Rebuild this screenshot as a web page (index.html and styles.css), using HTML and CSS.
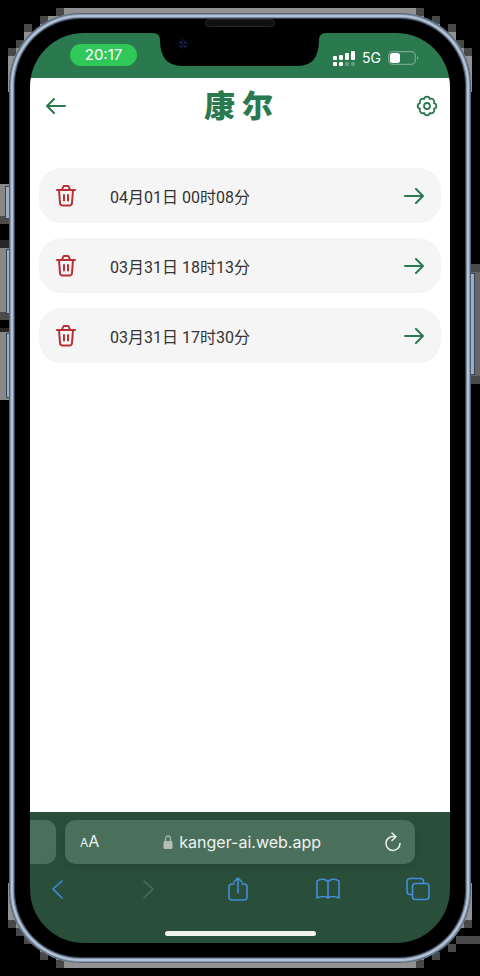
FILE: index.html
```html
<!DOCTYPE html>
<html lang="zh-CN">
<head>
<meta charset="utf-8">
<meta name="viewport" content="width=device-width, initial-scale=1">
<title>康尔</title>
<link rel="stylesheet" href="styles.css">
</head>
<body>
<svg class="halo" viewBox="0 0 480 976" preserveAspectRatio="none" shape-rendering="crispEdges" aria-hidden="true">
  <path fill="#929292" d="M64 8H416V16H424V24H440V32H456V48H464V56H472V92H464V883H472V920H464V928H456V936H448V944H432V952H424V968H64V960H56V952H40V944H32V936H24V928H16V920H8V883H16V92H8V56H16V40H24V32H40V16H64Z"/>
  <path fill="#484848" d="M56 8h8v8h-8zM40 16h8v8h-8zM24 24h8v8h-8zM16 40h8v8h-8zM8 48h8v8h-8zM416 8h8v8h-8zM432 16h8v8h-8zM448 24h8v8h-8zM456 40h8v8h-8zM464 48h8v8h-8zM8 920h8v8h-8zM16 928h8v8h-8zM24 936h8v8h-8zM40 952h8v8h-8zM56 960h8v8h-8zM416 960h8v8h-8zM432 952h8v8h-8zM448 944h8v8h-8zM456 936h24v8h-24zM464 920h8v8h-8z"/>
  <path fill="#888" d="M0 184h10v32H0zM0 248h10v64H0zM0 332h10v68H0z"/>
  <path fill="#4b4b4b" d="M0 216h10v8H0zM0 312h10v8H0zM470 264h10v8h-10zM470 376h10v8h-10z"/>
  <path fill="#262626" d="M0 240h10v8H0zM0 328h10v4H0z"/>
  <path fill="#666" d="M470 272h10v104h-10z"/>
  <g fill="#9dadbd" stroke="#34465a"><path d="M5 186h6v32H5zM6 249h5v64H6zM6 333h5v64H6zM469 273h5v101h-5z"/></g>
</svg>
<div class="phone">
  <svg class="notch" viewBox="0 0 174 50" aria-hidden="true">
    <path d="M-7 15Q0 15 0 22Q0 48 22 48H138Q159 48 159 22Q159 15 166 15V14H-7Z"/>
    <rect x="45.500" y="1.500" width="69" height="7" rx="3" fill="#101010" stroke="#262626"/>
    <circle cx="23" cy="26" r="5" fill="#090a1c"/>
    <path d="M21 24v1M25 24v1M21 28v1M25 28v1" stroke="#3437a3" stroke-width="1.500"/>
  </svg>
  <div class="screen">
    <div class="status">
      <time class="clock">20:17</time>
      <div class="signals">
        <svg width="22" height="16" viewBox="0 0 22 16" aria-hidden="true"><g fill="#fff"><rect x="0" y="6" width="4" height="4" rx="1"/><rect x="6" y="5" width="4" height="5" rx="1"/><rect x="12" y="3" width="4" height="7" rx="1"/><rect x="18" y="1" width="4" height="9" rx="1"/><rect x="0" y="12" width="4" height="4" rx="1"/><rect x="6" y="12" width="4" height="4" rx="1"/></g><g fill="#649c7c"><rect x="12" y="12" width="4" height="4" rx="1"/><rect x="18" y="12" width="4" height="4" rx="1"/></g></svg>
        <span>5G</span>
        <svg width="31" height="14" viewBox="0 0 31 14" aria-hidden="true"><rect x=".7" y=".7" width="26.6" height="12.6" rx="4" fill="none" stroke="#76a78a" stroke-width="1.3"/><rect x="2" y="2" width="10" height="10" rx="2.5" fill="#fff"/><path d="M29 5q3 2 0 4z" fill="#76a78a"/></svg>
      </div>
    </div>
    <header class="appbar">
      <button aria-label="返回"><svg width="20" height="16" viewBox="0 0 20 16" class="line"><path d="M19 8H1M8 1 1 8l7 7"/></svg></button>
      <h1><span>康</span><span>尔</span></h1>
      <button aria-label="设置"><svg width="22" height="22" viewBox="0 0 22 22" class="line gear"><path d="M17.900 13.900A2.950 2.950 0 0 1 13.900 17.900 2.950 2.950 0 0 1 8.100 17.900 2.950 2.950 0 0 1 4.100 13.900 2.950 2.950 0 0 1 4.100 8.100 2.950 2.950 0 0 1 8.100 4.100 2.950 2.950 0 0 1 13.900 4.100 2.950 2.950 0 0 1 17.900 8.100 2.950 2.950 0 0 1 17.900 13.900Z"/><circle cx="11" cy="11" r="3"/></svg></button>
    </header>
    <main>
      <ul class="records">
        <li><button aria-label="删除"><svg class="trash" width="20" height="22" viewBox="0 0 20 22"><path d="M1 5h18M6 5l1-3q.3-1 1-1h4q.7 0 1 1l1 3M3 5l1 13q.2 2.500 2.500 2.500h7Q15.800 20.500 16 18L17 5M8 10v5.500M12 10v5.500"/></svg></button><span>04月01日 00时08分</span><a href="#r1" aria-label="查看"><svg width="20" height="16" viewBox="0 0 20 16" class="line"><path d="M1 8h18M12 1l7 7-7 7"/></svg></a></li>
        <li><button aria-label="删除"><svg class="trash" width="20" height="22" viewBox="0 0 20 22"><path d="M1 5h18M6 5l1-3q.3-1 1-1h4q.7 0 1 1l1 3M3 5l1 13q.2 2.500 2.500 2.500h7Q15.800 20.500 16 18L17 5M8 10v5.500M12 10v5.500"/></svg></button><span>03月31日 18时13分</span><a href="#r2" aria-label="查看"><svg width="20" height="16" viewBox="0 0 20 16" class="line"><path d="M1 8h18M12 1l7 7-7 7"/></svg></a></li>
        <li><button aria-label="删除"><svg class="trash" width="20" height="22" viewBox="0 0 20 22"><path d="M1 5h18M6 5l1-3q.3-1 1-1h4q.7 0 1 1l1 3M3 5l1 13q.2 2.500 2.500 2.500h7Q15.800 20.500 16 18L17 5M8 10v5.500M12 10v5.500"/></svg></button><span>03月31日 17时30分</span><a href="#r3" aria-label="查看"><svg width="20" height="16" viewBox="0 0 20 16" class="line"><path d="M1 8h18M12 1l7 7-7 7"/></svg></a></li>
      </ul>
    </main>
    <footer class="browser">
      <div class="tabs">
        <div class="previous"></div>
        <div class="address">
          <button class="textsize"><small>A</small>A</button>
          <div class="url"><svg width="10" height="14" viewBox="0 0 10 14" aria-hidden="true"><path d="M2.500 6V4a2.500 3 0 0 1 5 0v2" fill="none" stroke="#a4b8ab" stroke-width="1.300"/><rect x=".5" y="6" width="9" height="8" rx="1.500" fill="#b2beb6"/></svg><span>kanger-ai.web.app</span></div>
          <button aria-label="刷新"><svg width="16" height="20" viewBox="0 0 16 20" fill="none" stroke="#eef3ef" stroke-width="1.500" stroke-linecap="round" stroke-linejoin="round"><path d="M9 4.500A7 7 0 1 0 15 11.500M7 1l4 3.700-4 3.800"/></svg></button>
        </div>
      </div>
      <nav class="tools">
        <button aria-label="后退"><svg width="24" height="24" viewBox="0 0 24 24"><path d="M16 4 7 12l9 9"/></svg></button>
        <button aria-label="前进" disabled><svg width="24" height="24" viewBox="0 0 24 24"><path d="m8 4 9 8-9 9"/></svg></button>
        <button aria-label="分享"><svg width="24" height="24" viewBox="0 0 24 24"><path d="M8 7H6Q3 7 3 10v10q0 3 3 3h12q3 0 3-3V10q0-3-3-3h-2M12 16V1M8 5l4-4 4 4"/></svg></button>
        <button aria-label="书签"><svg width="24" height="24" viewBox="0 0 24 24"><path d="M12 5v16M12 5C10 1.500 4 1.500 1 4v17c3-2 9-2 11 0 2-2 8-2 11 0V4c-3-2.500-9-2.500-11 1"/></svg></button>
        <button aria-label="标签页"><svg width="24" height="24" viewBox="0 0 24 24"><path d="M6.500 17.500H4q-3 0-3-3V4.500q0-3 3-3h10.500q3 0 3 3V6"/><rect x="6.500" y="6.500" width="16.500" height="16" rx="3"/></svg></button>
      </nav>
      <div class="home"></div>
    </footer>
  </div>
</div>
</body>
</html>
```
FILE: styles.css
```css
* { box-sizing: border-box; }
body { margin: 0; padding: 13px 9px; background: #000; position: relative; }
button { border: 0; padding: 0; background: none; color: inherit; font: inherit; display: grid; place-items: center; }
svg { display: block; flex: none; }
.halo { position: absolute; inset: 0; width: 100%; height: 100%; }
.phone {
  position: relative;
  display: flex;
  min-height: calc(100vh - 26px);
  padding: 20px 21px;
  border-radius: 72px;
  background: #000;
  box-shadow: inset 0 0 0 1px #53657a, inset 0 0 0 2px #8798ab, inset 0 0 0 4px #b4c3d5, inset 0 0 0 5px #78899f, inset 0 0 0 6px #354152;
}
.notch { position: absolute; left: 50%; top: 5px; width: 174px; height: 50px; margin-left: -80px; overflow: visible; }
.screen { flex: 1; min-width: 0; display: flex; flex-direction: column; overflow: hidden; border-radius: 54px; }
.status { height: 45px; padding: 0 31px 0 40px; display: flex; align-items: center; justify-content: space-between; background: #2a794f; color: #fff; font: 15px/22px Inter, sans-serif; }
.clock { width: 67px; height: 22px; border-radius: 11px; background: #31c85a; text-align: center; margin-bottom: 2px; }
.signals { display: flex; align-items: center; gap: 7px; padding-top: 4px; font-size: 14px; }
.appbar { height: 56px; padding: 0 12px 0 16px; display: flex; align-items: center; justify-content: space-between; background: #fff; }
.line { fill: none; stroke: #2a794f; stroke-width: 2; stroke-linecap: round; stroke-linejoin: round; }
.gear { stroke-width: 1.8; }
h1 { margin: 0; padding: 0 5px 4px 0; display: flex; gap: 7px; color: #2a794f; font: 900 31px/48px "Noto Sans CJK SC", sans-serif; }
main { flex: 1; padding: 34px 9px; background: #fff; }
.records { margin: 0; padding: 0; list-style: none; display: grid; gap: 15px; }
.records li { height: 55px; padding: 0 17px; display: flex; align-items: center; border-radius: 22px; background: #f5f5f5; color: #333; font: 16px/24px Roboto, "Noto Sans CJK SC", sans-serif; }
.records span { flex: 1; padding: 4px 0 0 34px; }
.trash { fill: none; stroke: #b92f34; stroke-width: 2; stroke-linecap: round; stroke-linejoin: round; }
.browser { height: 131px; padding-top: 8px; background: #294f3b; }
.tabs { display: flex; gap: 9px; padding-right: 35px; height: 44px; }
.previous { width: 26px; background: #4a705c; border-radius: 0 10px 10px 0; }
.address { flex: 1; display: flex; align-items: center; justify-content: space-between; padding: 0 14px 0 15px; border-radius: 10px; background: #4a705c; color: #eef3ef; font: 16px/24px Inter, sans-serif; box-shadow: 0 2px 10px #0002; }
.textsize { display: flex; align-items: baseline; }
.textsize small { font-size: 12px; }
.url { display: flex; align-items: center; gap: 6px; }
.tools { display: flex; justify-content: space-between; padding: 13px 20px 0 16px; }
.tools svg { fill: none; stroke: #438ddd; stroke-width: 1.6; stroke-linecap: round; stroke-linejoin: round; }
.tools button:disabled svg { stroke: #4a6d59; }
.home { width: 151px; height: 5px; margin: 30px auto 0; border-radius: 3px; background: #f0f1ed; }
```
